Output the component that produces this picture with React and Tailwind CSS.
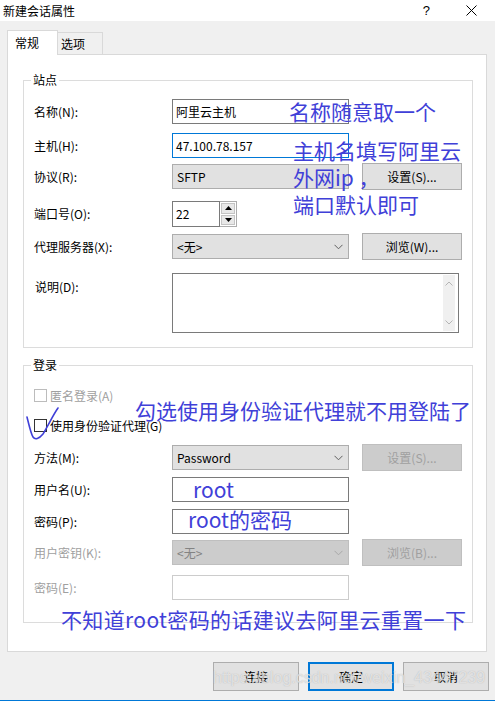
import React from "react";

const Chevron = ({ color = "#606060" }) => (
  <svg width="9" height="6" viewBox="0 0 9 6" className="shrink-0">
    <path d="M0.5 0.8 L4.5 4.8 L8.5 0.8" fill="none" stroke={color} strokeWidth="1" />
  </svg>
);

const Label = ({ children, disabled, top }) => (
  <div
    className={`w-[138px] shrink-0 text-[12px] leading-[16px] ${disabled ? "text-[#a0a0a0]" : "text-black"} ${top ? "self-start pt-[6px]" : ""}`}
  >
    {children}
  </div>
);

const Input = ({ children, focus, disabled }) => (
  <div
    className={`w-[177px] h-[25px] border bg-white flex items-center pl-[3px] text-[12px] text-black ${
      focus ? "border-[#0078d7]" : disabled ? "border-[#cccccc]" : "border-[#7a7a7a]"
    }`}
  >
    {children}
  </div>
);

const Combo = ({ children, chevron = true, disabled }) => (
  <div
    className={`w-[177px] h-[25px] border flex items-center justify-between pl-[4px] pr-[5px] text-[12px] ${
      disabled ? "bg-[#cccccc] border-[#bfbfbf] text-[#838383]" : "bg-[#e1e1e1] border-[#adadad] text-black"
    }`}
  >
    <span>{children}</span>
    {chevron && <Chevron color={disabled ? "#a8a8a8" : "#606060"} />}
  </div>
);

const Button = ({ children, disabled }) => (
  <div
    className={`ml-[13px] w-[100px] h-[27px] border flex items-center justify-center text-[12px] ${
      disabled ? "bg-[#cccccc] border-[#bfbfbf] text-[#a0a0a0]" : "bg-[#e1e1e1] border-[#adadad] text-black"
    }`}
  >
    {children}
  </div>
);

const Row = ({ children, h, mt }) => (
  <div className={`flex items-center ${h} ${mt}`}>{children}</div>
);

const Group = ({ legend, children, h, mt }) => (
  <div className={`relative w-[450px] ${h} ${mt} ml-[15px] border border-[#dcdcdc]`}>
    <div className="absolute left-[7px] top-[-9px] bg-white px-[2px] text-[12px] leading-[16px] text-black">
      {legend}
    </div>
    <div className="flex flex-col pl-[10px]">{children}</div>
  </div>
);

export default function App() {
  return (
    <div className="relative w-[495px] h-[701px] bg-[#f0f0f0] flex flex-col font-['Noto_Sans_CJK_SC','Microsoft_YaHei',sans-serif] overflow-hidden">
      {/* Title bar */}
      <div className="h-[21px] bg-white flex items-center justify-between shrink-0">
        <div className="pl-[3px] text-[12px] text-black leading-none">新建会话属性</div>
        <div className="flex items-center">
          <span className="text-[13px] font-['Liberation_Sans',sans-serif] text-black mr-[36px] leading-none">?</span>
          <svg width="11" height="11" viewBox="0 0 11 11" className="mr-[18px]">
            <path d="M0.5 0.5 L10.5 10.5 M10.5 0.5 L0.5 10.5" stroke="#000" strokeWidth="1" />
          </svg>
        </div>
      </div>

      {/* Tabs */}
      <div className="flex items-end h-[24px] mt-[9px] pl-[7px] shrink-0 relative z-10">
        <div className="w-[51px] h-[25px] -mb-px bg-white border border-b-0 border-[#d9d9d9] pl-[7px] pt-[4px] text-[12px] leading-[16px] text-black">
          常规
        </div>
        <div className="w-[45px] h-[22px] bg-[#f0f0f0] border border-l-0 border-b-0 border-[#d9d9d9] pl-[3px] pt-[3px] text-[12px] leading-[16px] text-black">
          选项
        </div>
      </div>

      {/* Panel */}
      <div className="ml-[7px] w-[480px] h-[598px] bg-white border border-[#d9d9d9] flex flex-col shrink-0">
        <Group legend="站点" h="h-[268px]" mt="mt-[25px]">
          <Row h="h-[25px]" mt="mt-[18px]">
            <Label>名称(N):</Label>
            <Input>阿里云主机</Input>
          </Row>
          <Row h="h-[25px]" mt="mt-[9px]">
            <Label>主机(H):</Label>
            <Input focus>47.100.78.157</Input>
          </Row>
          <Row h="h-[27px]" mt="mt-[5px]">
            <Label>协议(R):</Label>
            <Combo chevron={false}>SFTP</Combo>
            <Button>设置(S)...</Button>
          </Row>
          <Row h="h-[26px]" mt="mt-[11px]">
            <Label>端口号(O):</Label>
            <div className="flex h-[26px]">
              <div className="w-[48px] h-[26px] border border-[#7a7a7a] bg-white flex items-center pl-[3px] text-[12px]">
                22
              </div>
              <div className="w-[17px] h-[26px] flex flex-col border border-l-0 border-[#adadad] bg-white p-[1px] gap-[1px]">
                <div className="flex-1 bg-[#e8e8e8] border border-[#c4c4c4] flex items-center justify-center">
                  <svg width="7" height="4" viewBox="0 0 7 4"><path d="M3.5 0 L7 4 L0 4 Z" fill="#000" /></svg>
                </div>
                <div className="flex-1 bg-[#e8e8e8] border border-[#c4c4c4] flex items-center justify-center">
                  <svg width="7" height="4" viewBox="0 0 7 4"><path d="M0 0 L7 0 L3.5 4 Z" fill="#000" /></svg>
                </div>
              </div>
            </div>
          </Row>
          <Row h="h-[27px]" mt="mt-[6px]">
            <Label>代理服务器(X):</Label>
            <Combo>&lt;无&gt;</Combo>
            <Button>浏览(W)...</Button>
          </Row>
          <Row h="h-[60px]" mt="mt-[13px]">
            <Label top>
              <span className="pl-[1px]">说明(D):</span>
            </Label>
            <div className="w-[287px] h-[60px] border border-[#7a7a7a] bg-white flex justify-end">
              <div className="w-[12px] mr-[3px] my-[1px] bg-[#f0f0f0] flex flex-col items-center justify-between py-[6px]">
                <svg width="8" height="5" viewBox="0 0 8 5"><path d="M0.5 4.5 L4 1 L7.5 4.5" fill="none" stroke="#b5b5b5" /></svg>
                <svg width="8" height="5" viewBox="0 0 8 5"><path d="M0.5 0.5 L4 4 L7.5 0.5" fill="none" stroke="#b5b5b5" /></svg>
              </div>
            </div>
          </Row>
        </Group>

        <Group legend="登录" h="h-[258px]" mt="mt-[17px]">
          <div className="flex items-center h-[13px] mt-[23px]">
            <div className="w-[13px] h-[13px] border border-[#bcbcbc] bg-white" />
            <span className="ml-[3px] text-[12px] text-[#a0a0a0] leading-none">匿名登录(A)</span>
          </div>
          <div className="flex items-center h-[13px] mt-[17px]">
            <div className="w-[13px] h-[13px] border border-[#333333] bg-white" />
            <span className="ml-[3px] text-[12px] text-black leading-none">使用身份验证代理(G)</span>
          </div>
          <Row h="h-[27px]" mt="mt-[12px]">
            <Label>方法(M):</Label>
            <Combo>Password</Combo>
            <Button disabled>设置(S)...</Button>
          </Row>
          <Row h="h-[25px]" mt="mt-[6px]">
            <Label>用户名(U):</Label>
            <Input />
          </Row>
          <Row h="h-[25px]" mt="mt-[7px]">
            <Label>密码(P):</Label>
            <Input />
          </Row>
          <Row h="h-[27px]" mt="mt-[5px]">
            <Label disabled>用户密钥(K):</Label>
            <Combo disabled>&lt;无&gt;</Combo>
            <Button disabled>浏览(B)...</Button>
          </Row>
          <Row h="h-[25px]" mt="mt-[9px]">
            <Label disabled>密码(E):</Label>
            <Input disabled />
          </Row>
        </Group>
      </div>

      {/* Bottom buttons */}
      <div className="flex mt-[10px] pl-[213px] gap-[9px] shrink-0">
        <div className="w-[86px] h-[29px] bg-[#e1e1e1] border border-[#adadad] flex items-center justify-center text-[12px] text-black">
          连接
        </div>
        <div className="w-[86px] h-[29px] bg-[#e1e1e1] border-2 border-[#0078d7] flex items-center justify-center text-[12px] text-black">
          确定
        </div>
        <div className="w-[86px] h-[29px] bg-[#e1e1e1] border border-[#adadad] flex items-center justify-center text-[12px] text-black">
          取消
        </div>
      </div>

      {/* bottom window border */}
      <div className="absolute left-0 right-0 bottom-0 h-px bg-[#0078d7]" />

      {/* Annotations */}
      <div className="absolute left-[289px] top-[98px] text-[21px] leading-[26px] text-[#4040d8] whitespace-nowrap">
        名称随意取一个
      </div>
      <div className="absolute left-[293px] top-[137px] text-[21px] leading-[26px] text-[#4040d8] whitespace-nowrap">
        主机名填写阿里云
      </div>
      <div className="absolute left-[293px] top-[164px] text-[21px] leading-[26px] text-[#4040d8] whitespace-nowrap">
        外网ip&nbsp;，
      </div>
      <div className="absolute left-[293px] top-[191px] text-[21px] leading-[26px] text-[#4040d8] whitespace-nowrap">
        端口默认即可
      </div>
      <div className="absolute left-[135px] top-[397px] text-[21px] leading-[26px] text-[#4040d8] whitespace-nowrap">
        勾选使用身份验证代理就不用登陆了
      </div>
      <div className="absolute left-[193px] top-[476px] text-[21px] leading-[26px] text-[#4040d8] whitespace-nowrap">
        root
      </div>
      <div className="absolute left-[188px] top-[506px] text-[21px] leading-[26px] text-[#4040d8] whitespace-nowrap">
        root的密码
      </div>
      <div className="absolute left-[61px] top-[606px] text-[21px] leading-[26px] tracking-[0.35px] text-[#4040d8] whitespace-nowrap">
        不知道root密码的话建议去阿里云重置一下
      </div>

      {/* handwritten check */}
      <svg className="absolute left-0 top-0 pointer-events-none" width="495" height="701" viewBox="0 0 495 701">
        <path
          d="M27 417 C29 425 31 434 33 437 C35 440 39 439 43 434 C48 426 53 415 58 408"
          fill="none"
          stroke="#4040d8"
          strokeWidth="1.6"
          strokeLinecap="round"
        />
      </svg>

      {/* watermark */}
      <div className="absolute left-[213px] top-[668px] text-[16px] leading-[20px] font-['Liberation_Sans',sans-serif] text-white/60 whitespace-nowrap [text-shadow:0_0_1px_rgba(150,150,150,0.7)]">
        https://blog.csdn.net/weixin_43447239
      </div>
    </div>
  );
}
